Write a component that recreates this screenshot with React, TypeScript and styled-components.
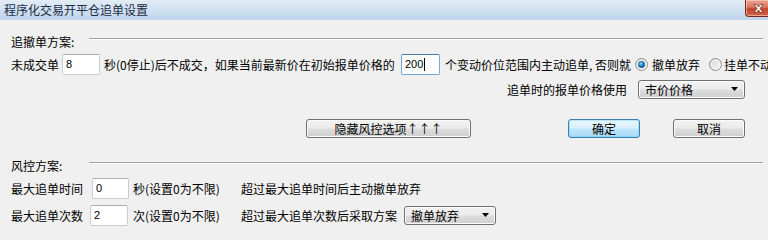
import React, { FunctionComponent } from 'react';
import styled, { createGlobalStyle, css } from 'styled-components';

const Global = createGlobalStyle`
  html, body {
    margin: 0;
    padding: 0;
    background: #f0f0f0;
  }
`;

const CJK = `"Noto Sans CJK SC", "Noto Sans", sans-serif`;

const S = {
  Window: styled.div`
    width: 768px;
    height: 232px;
    overflow: hidden;
    background: #f0f0f0;
    font-family: ${CJK};
    font-size: 12px;
    color: #000;
    display: flex;
    flex-direction: column;
  `,

  TitleBar: styled.div`
    height: 20px;
    flex: none;
    display: flex;
    align-items: flex-start;
    justify-content: space-between;
    background: linear-gradient(to bottom, #e3ecf7 0%, #d3e2f2 45%, #bdd4ec 100%);
  `,

  Title: styled.div`
    padding-left: 4px;
    line-height: 19px;
    color: #1b2c44;
  `,

  CloseButton: styled.div`
    width: 26px;
    height: 17px;
    margin-right: -3px;
    box-sizing: border-box;
    border: 1px solid #7a271b;
    border-top: none;
    border-radius: 0 0 4px 4px;
    background: linear-gradient(to bottom, #e7a797 0%, #d9775f 45%, #c0442c 55%, #d2644a 100%);
    display: flex;
    align-items: center;
    justify-content: center;
    box-shadow: inset 0 0 0 1px rgba(255, 210, 200, 0.6);
  `,

  Body: styled.div`
    flex: 1;
    display: flex;
    flex-direction: column;
    padding: 0 5px 0 11px;
  `,

  SectionHead: styled.div<{ $top: number }>`
    height: 16px;
    margin-top: ${(p) => p.$top}px;
    display: flex;
    align-items: center;
  `,

  SectionLabel: styled.span`
    width: 78px;
    flex: none;
    white-space: nowrap;
  `,

  Etched: styled.div`
    flex: 1;
    height: 0;
    border-top: 1px solid #a0a0a0;
    border-bottom: 1px solid #ffffff;
    margin-top: -5px;
  `,

  Row: styled.div<{ $top: number; $h: number }>`
    height: ${(p) => p.$h}px;
    margin-top: ${(p) => p.$top}px;
    display: flex;
    align-items: center;
    white-space: nowrap;
  `,

  Text: styled.span<{ $w?: number; $right?: boolean }>`
    flex: none;
    white-space: nowrap;
    overflow: visible;
    ${(p) =>
      p.$w !== undefined &&
      css`
        width: ${p.$w}px;
      `}
    ${(p) =>
      p.$right &&
      css`
        text-align: right;
      `}
  `,

  Input: styled.div<{ $w: number; $focused?: boolean }>`
    flex: none;
    width: ${(p) => p.$w}px;
    height: 21px;
    box-sizing: border-box;
    background: #fff;
    border: 1px solid ${(p) => (p.$focused ? '#6fa9dc' : '#c5cdd6')};
    border-top-color: ${(p) => (p.$focused ? '#3d7bad' : '#abadb3')};
    border-radius: 2px;
    padding: 0 3px;
    display: flex;
    align-items: center;
    font-family: "Liberation Sans", Arial, sans-serif;
    font-size: 11px;
  `,

  Caret: styled.span`
    display: inline-block;
    width: 1px;
    height: 13px;
    background: #000;
    margin-left: 1px;
  `,

  Radio: styled.span<{ $gap: number }>`
    flex: none;
    width: 13px;
    height: 13px;
    margin-right: ${(p) => p.$gap}px;
    display: inline-flex;
  `,

  Select: styled.div<{ $w: number; $h: number }>`
    flex: none;
    width: ${(p) => p.$w}px;
    height: ${(p) => p.$h}px;
    box-sizing: border-box;
    border: 1px solid #707070;
    border-radius: 3px;
    background: linear-gradient(to bottom, #f2f2f2 0%, #ebebeb 49%, #dddddd 51%, #cfcfcf 100%);
    box-shadow: inset 0 0 0 1px #fcfcfc;
    display: flex;
    align-items: center;
    justify-content: space-between;
    padding: 0 6px 0 6px;
  `,

  ButtonRow: styled.div`
    height: 19px;
    margin-top: 20px;
    display: flex;
    align-items: center;
  `,

  Button: styled.div<{ $w: number; $left: number; $primary?: boolean }>`
    flex: none;
    width: ${(p) => p.$w}px;
    height: 19px;
    margin-left: ${(p) => p.$left}px;
    box-sizing: border-box;
    border-radius: 3px;
    display: flex;
    align-items: center;
    justify-content: center;
    ${(p) =>
      p.$primary
        ? css`
            border: 1px solid #3c7fb1;
            background: linear-gradient(to bottom, #eaf6fd 0%, #d9f0fc 49%, #bee6fd 51%, #a7d9f5 100%);
            box-shadow: inset 0 0 0 1px #48d3fb55;
          `
        : css`
            border: 1px solid #707070;
            background: linear-gradient(to bottom, #f2f2f2 0%, #ebebeb 49%, #dddddd 51%, #cfcfcf 100%);
            box-shadow: inset 0 0 0 1px #fcfcfc;
          `}
  `,
};

const Arrow: FunctionComponent = () => (
  <svg width="7" height="4" viewBox="0 0 7 4">
    <path d="M0 0 H7 L3.5 4 Z" fill="#000" />
  </svg>
);

const RadioIcon: FunctionComponent<{ checked?: boolean }> = ({ checked }) => (
  <svg width="13" height="13" viewBox="0 0 13 13">
    <defs>
      <linearGradient id="rbg" x1="0" y1="0" x2="1" y2="1">
        <stop offset="0" stopColor="#d8d8d8" />
        <stop offset="1" stopColor="#f6f6f6" />
      </linearGradient>
      <radialGradient id="rdot" cx="0.4" cy="0.35" r="0.7">
        <stop offset="0" stopColor="#8fe2ff" />
        <stop offset="0.5" stopColor="#1f8bd0" />
        <stop offset="1" stopColor="#0b4c86" />
      </radialGradient>
    </defs>
    <circle cx="6.5" cy="6.5" r="6" fill="url(#rbg)" stroke="#8e8f8f" strokeWidth="1" />
    <circle cx="6.5" cy="6.5" r="4.3" fill="none" stroke="#ffffff" strokeOpacity="0.7" strokeWidth="0.8" />
    {checked && <circle cx="6.5" cy="6.5" r="3.2" fill="url(#rdot)" stroke="#0f3f6e" strokeWidth="0.5" />}
  </svg>
);

const CloseX: FunctionComponent = () => (
  <svg width="11" height="9" viewBox="0 0 11 9">
    <path
      d="M1 0.5 L3.5 0.5 L5.5 3 L7.5 0.5 L10 0.5 L7 4.5 L10 8.5 L7.5 8.5 L5.5 6 L3.5 8.5 L1 8.5 L4 4.5 Z"
      fill="#fff"
      stroke="#6b2418"
      strokeWidth="0.7"
    />
  </svg>
);

const App: FunctionComponent = () => (
  <S.Window>
    <Global />
    <S.TitleBar>
      <S.Title>程序化交易开平仓追单设置</S.Title>
      <S.CloseButton>
        <CloseX />
      </S.CloseButton>
    </S.TitleBar>

    <S.Body>
      <S.SectionHead $top={13}>
        <S.SectionLabel>追撤单方案:</S.SectionLabel>
        <S.Etched />
      </S.SectionHead>

      <S.Row $top={4} $h={22}>
        <S.Text $w={51}>未成交单</S.Text>
        <S.Input $w={38}>8</S.Input>
        <S.Text $w={4} />
        <S.Text $w={297}>秒(0停止)后不成交，如果当前最新价在初始报单价格的</S.Text>
        <S.Input $w={39} $focused>
          200
          <S.Caret />
        </S.Input>
        <S.Text $w={5} />
        <S.Text $w={190}>个变动价位范围内主动追单, 否则就</S.Text>
        <S.Radio $gap={4}>
          <RadioIcon checked />
        </S.Radio>
        <S.Text $w={57}>撤单放弃</S.Text>
        <S.Radio $gap={2}>
          <RadioIcon />
        </S.Radio>
        <S.Text>挂单不动</S.Text>
      </S.Row>

      <S.Row $top={4} $h={20}>
        <S.Text $w={616} $right>
          追单时的报单价格使用
        </S.Text>
        <S.Text $w={11} />
        <S.Select $w={107} $h={19}>
          <span>市价价格</span>
          <Arrow />
        </S.Select>
      </S.Row>

      <S.ButtonRow>
        <S.Button $w={165} $left={295}>
          隐藏风控选项↑↑↑
        </S.Button>
        <S.Button $w={72} $left={97} $primary>
          确定
        </S.Button>
        <S.Button $w={72} $left={33}>
          取消
        </S.Button>
      </S.ButtonRow>

      <S.SectionHead $top={19}>
        <S.SectionLabel>风控方案:</S.SectionLabel>
        <S.Etched />
      </S.SectionHead>

      <S.Row $top={4} $h={22}>
        <S.Text $w={81}>最大追单时间</S.Text>
        <S.Input $w={37}>0</S.Input>
        <S.Text $w={4} />
        <S.Text $w={108}>秒(设置0为不限)</S.Text>
        <S.Text>超过最大追单时间后主动撤单放弃</S.Text>
      </S.Row>

      <S.Row $top={5} $h={22}>
        <S.Text $w={79}>最大追单次数</S.Text>
        <S.Input $w={38}>2</S.Input>
        <S.Text $w={5} />
        <S.Text $w={108}>次(设置0为不限)</S.Text>
        <S.Text $w={163}>超过最大追单次数后采取方案</S.Text>
        <S.Select $w={92} $h={19}>
          <span>撤单放弃</span>
          <Arrow />
        </S.Select>
      </S.Row>
    </S.Body>
  </S.Window>
);

export default App;
